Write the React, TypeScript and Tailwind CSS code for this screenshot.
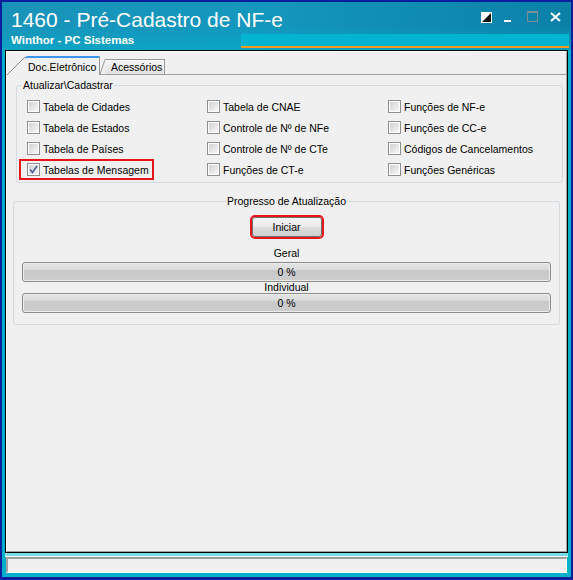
import React from 'react'

type Item = { label: string; checked?: boolean; marked?: boolean }

const rows: Item[][] = [
  [{ label: 'Tabela de Cidades' }, { label: 'Tabela de CNAE' }, { label: 'Funções de NF-e' }],
  [{ label: 'Tabela de Estados' }, { label: 'Controle de Nº de NFe' }, { label: 'Funções de CC-e' }],
  [{ label: 'Tabela de Países' }, { label: 'Controle de Nº de CTe' }, { label: 'Códigos de Cancelamentos' }],
  [{ label: 'Tabelas de Mensagem', checked: true, marked: true }, { label: 'Funções de CT-e' }, { label: 'Funções Genéricas' }],
]

const CheckBox: React.FC<{ checked?: boolean }> = ({ checked }) => (
  <span className="flex w-[13px] h-[13px] shrink-0 border border-[#8e8f8f] bg-white p-px">
    <span className="flex flex-1 items-center justify-center bg-gradient-to-br from-[#d2d2d2] to-[#f7f7f7]">
      {checked && (
        <svg width="9" height="9" viewBox="0 0 9 9">
          <path d="M1 4.5 L3.5 7.5 L8 1" fill="none" stroke="#4b5f94" strokeWidth="1.6" />
        </svg>
      )}
    </span>
  </span>
)

const Option: React.FC<{ item: Item }> = ({ item }) => (
  <div className="flex h-[21px] items-center">
    <div className="relative flex items-center gap-[3px]">
      <CheckBox checked={item.checked} />
      <span className="whitespace-nowrap">{item.label}</span>
      {item.marked && (
        <span className="pointer-events-none absolute -top-[4px] -bottom-[4px] -left-[8px] -right-[5px] border-2 border-[#e8141b]" />
      )}
    </div>
  </div>
)

const ProgressBar: React.FC<{ value: number }> = ({ value }) => (
  <div className="flex h-[20px] w-full items-center justify-center rounded-[3px] border border-[#8c8c8c] bg-[linear-gradient(to_bottom,#e4e4e4_0%,#dcdcdc_35%,#c9c9c9_42%,#cdcdcd_100%)] shadow-[inset_0_0_0_1px_#ececec]">
    {value} %
  </div>
)

const WindowButtons: React.FC = () => (
  <div className="flex items-start pr-[10px] pt-[10px]">
    <svg width="11" height="11" viewBox="0 0 11 11">
      <rect x="0.5" y="0.5" width="10" height="10" fill="#111" stroke="#fff" />
      <polygon points="0,0 11,0 0,11" fill="#fff" />
    </svg>
    <div className="ml-[12px] mt-[8px] h-[2px] w-[7px] bg-white" />
    <svg className="ml-[16px] -mt-px" width="11" height="11" viewBox="0 0 11 11">
      <rect x="0.5" y="0.5" width="10" height="10" fill="none" stroke="#7d8d97" />
      <rect x="0" y="0" width="11" height="2" fill="#7d8d97" />
    </svg>
    <svg className="ml-[12px]" width="11" height="10" viewBox="0 0 11 10">
      <path d="M1 1 L10 9 M10 1 L1 9" stroke="#fff" strokeWidth="2" />
    </svg>
  </div>
)

export default function App() {
  return (
    <div className="h-[580px] w-[573px] bg-[#0b1f9c] px-[2px] pb-[3px] pt-[2px] font-['Liberation_Sans',Arial,sans-serif] text-[10.5px] leading-[12px] text-black">
      <div className="flex h-full flex-col bg-[#00b0ca]">
        {/* title bar */}
        <div className="flex h-[48px] flex-col bg-[linear-gradient(to_bottom,rgba(0,0,0,0)_50%,rgba(0,178,206,0.55)_100%),linear-gradient(100deg,#1a93b9_0%,#1497be_45%,#0b80a7_100%)] text-white">
          <div className="flex h-[32px] justify-between">
            <div className="pl-[9px] pt-[6px] text-[21px] leading-[24px]">1460 - Pré-Cadastro de NF-e</div>
            <WindowButtons />
          </div>
          <div className="flex h-[14px]">
            <div className="w-[239px] pl-[9px] text-[11.5px] font-bold leading-[12px]">Winthor - PC Sistemas</div>
            <div className="mr-[2px] flex-1 border-b-2 border-[#f39c1e] bg-[#02b4d0]" />
          </div>
        </div>

        {/* main panel */}
        <div className="mx-[3px] flex flex-1 flex-col border border-black">
          <div className="flex flex-1 flex-col border-b border-l border-r border-t border-b-[#a0a0a0] border-l-white border-r-[#a0a0a0] border-t-white bg-[#f0f0f0]">
            {/* tabs */}
            <div className="mt-[3px] flex h-[20px] items-end">
              <svg className="shrink-0" width="18" height="19" viewBox="0 0 18 19">
                <line x1="0" y1="19" x2="18" y2="1" stroke="#8a8a8a" />
              </svg>
              <div className="flex h-[19px] w-[75px] items-center rounded-tl-[3px] border-r border-t-2 border-r-[#9a9a9a] border-t-[#3d95ea] pl-[3px]">
                Doc.Eletrônico
              </div>
              <svg className="shrink-0" width="5" height="16" viewBox="0 0 5 16">
                <line x1="0" y1="15.5" x2="5" y2="0.5" stroke="#9a9a9a" />
                <line x1="0" y1="15.5" x2="5" y2="15.5" stroke="#a0a0a0" />
              </svg>
              <div className="flex h-[16px] w-[60px] items-center border-b border-r border-t border-b-[#a0a0a0] border-r-[#9a9a9a] border-t-[#9a9a9a] bg-gradient-to-b from-[#f6f6f6] to-[#e2e2e2] pl-[6px]">
                Acessórios
              </div>
              <div className="flex-1 border-b border-[#a0a0a0]" />
            </div>

            {/* group 1 */}
            <fieldset className="ml-[9px] mr-[3px] mt-[4px] rounded-[3px] border border-[#d3dbe0] pb-[2px] pl-[10px] pt-[5px]">
              <legend className="-ml-[5px] px-px leading-[12px]">{'Atualizar\\Cadastrar'}</legend>
              <div className="grid grid-cols-[180px_181px_1fr]">
                {rows.map((row, i) =>
                  row.map((item, j) => <Option key={`${i}-${j}`} item={item} />)
                )}
              </div>
            </fieldset>

            {/* group 2 */}
            <fieldset className="ml-[6px] mr-[6px] mt-[12px] flex flex-col items-center rounded-[3px] border border-[#d3dbe0] px-[8px] pb-[11px] pt-[10px]">
              <legend className="mx-auto px-px leading-[12px]">Progresso de Atualização</legend>
              <div className="flex flex-col items-center">
                <button className="flex h-[20px] w-[70px] items-center justify-center rounded-[3px] border border-[#707070] bg-[linear-gradient(to_bottom,#f3f3f3_0%,#ebebeb_48%,#dddddd_52%,#cfcfcf_100%)] outline-2 outline-[#e8141b]">
                  Iniciar
                </button>
              </div>
              <div className="mt-[10px] text-center leading-[12px]">Geral</div>
              <div className="mt-[3px] w-full">
                <ProgressBar value={0} />
              </div>
              <div className="h-[10px] text-center leading-[10px]">Individual</div>
              <div className="mt-px w-full">
                <ProgressBar value={0} />
              </div>
            </fieldset>
          </div>
        </div>

        {/* status bar */}
        <div className="mx-[3px] h-[4px] border-b border-white bg-[#7ddbe8]" />
        <div className="mx-[4px] h-[16px] border-b border-l-2 border-r border-t-2 border-b-white border-l-[#a0a0a0] border-r-white border-t-[#a0a0a0] bg-[#f0f0f0]" />
        <div className="h-[4px]" />
      </div>
    </div>
  )
}
